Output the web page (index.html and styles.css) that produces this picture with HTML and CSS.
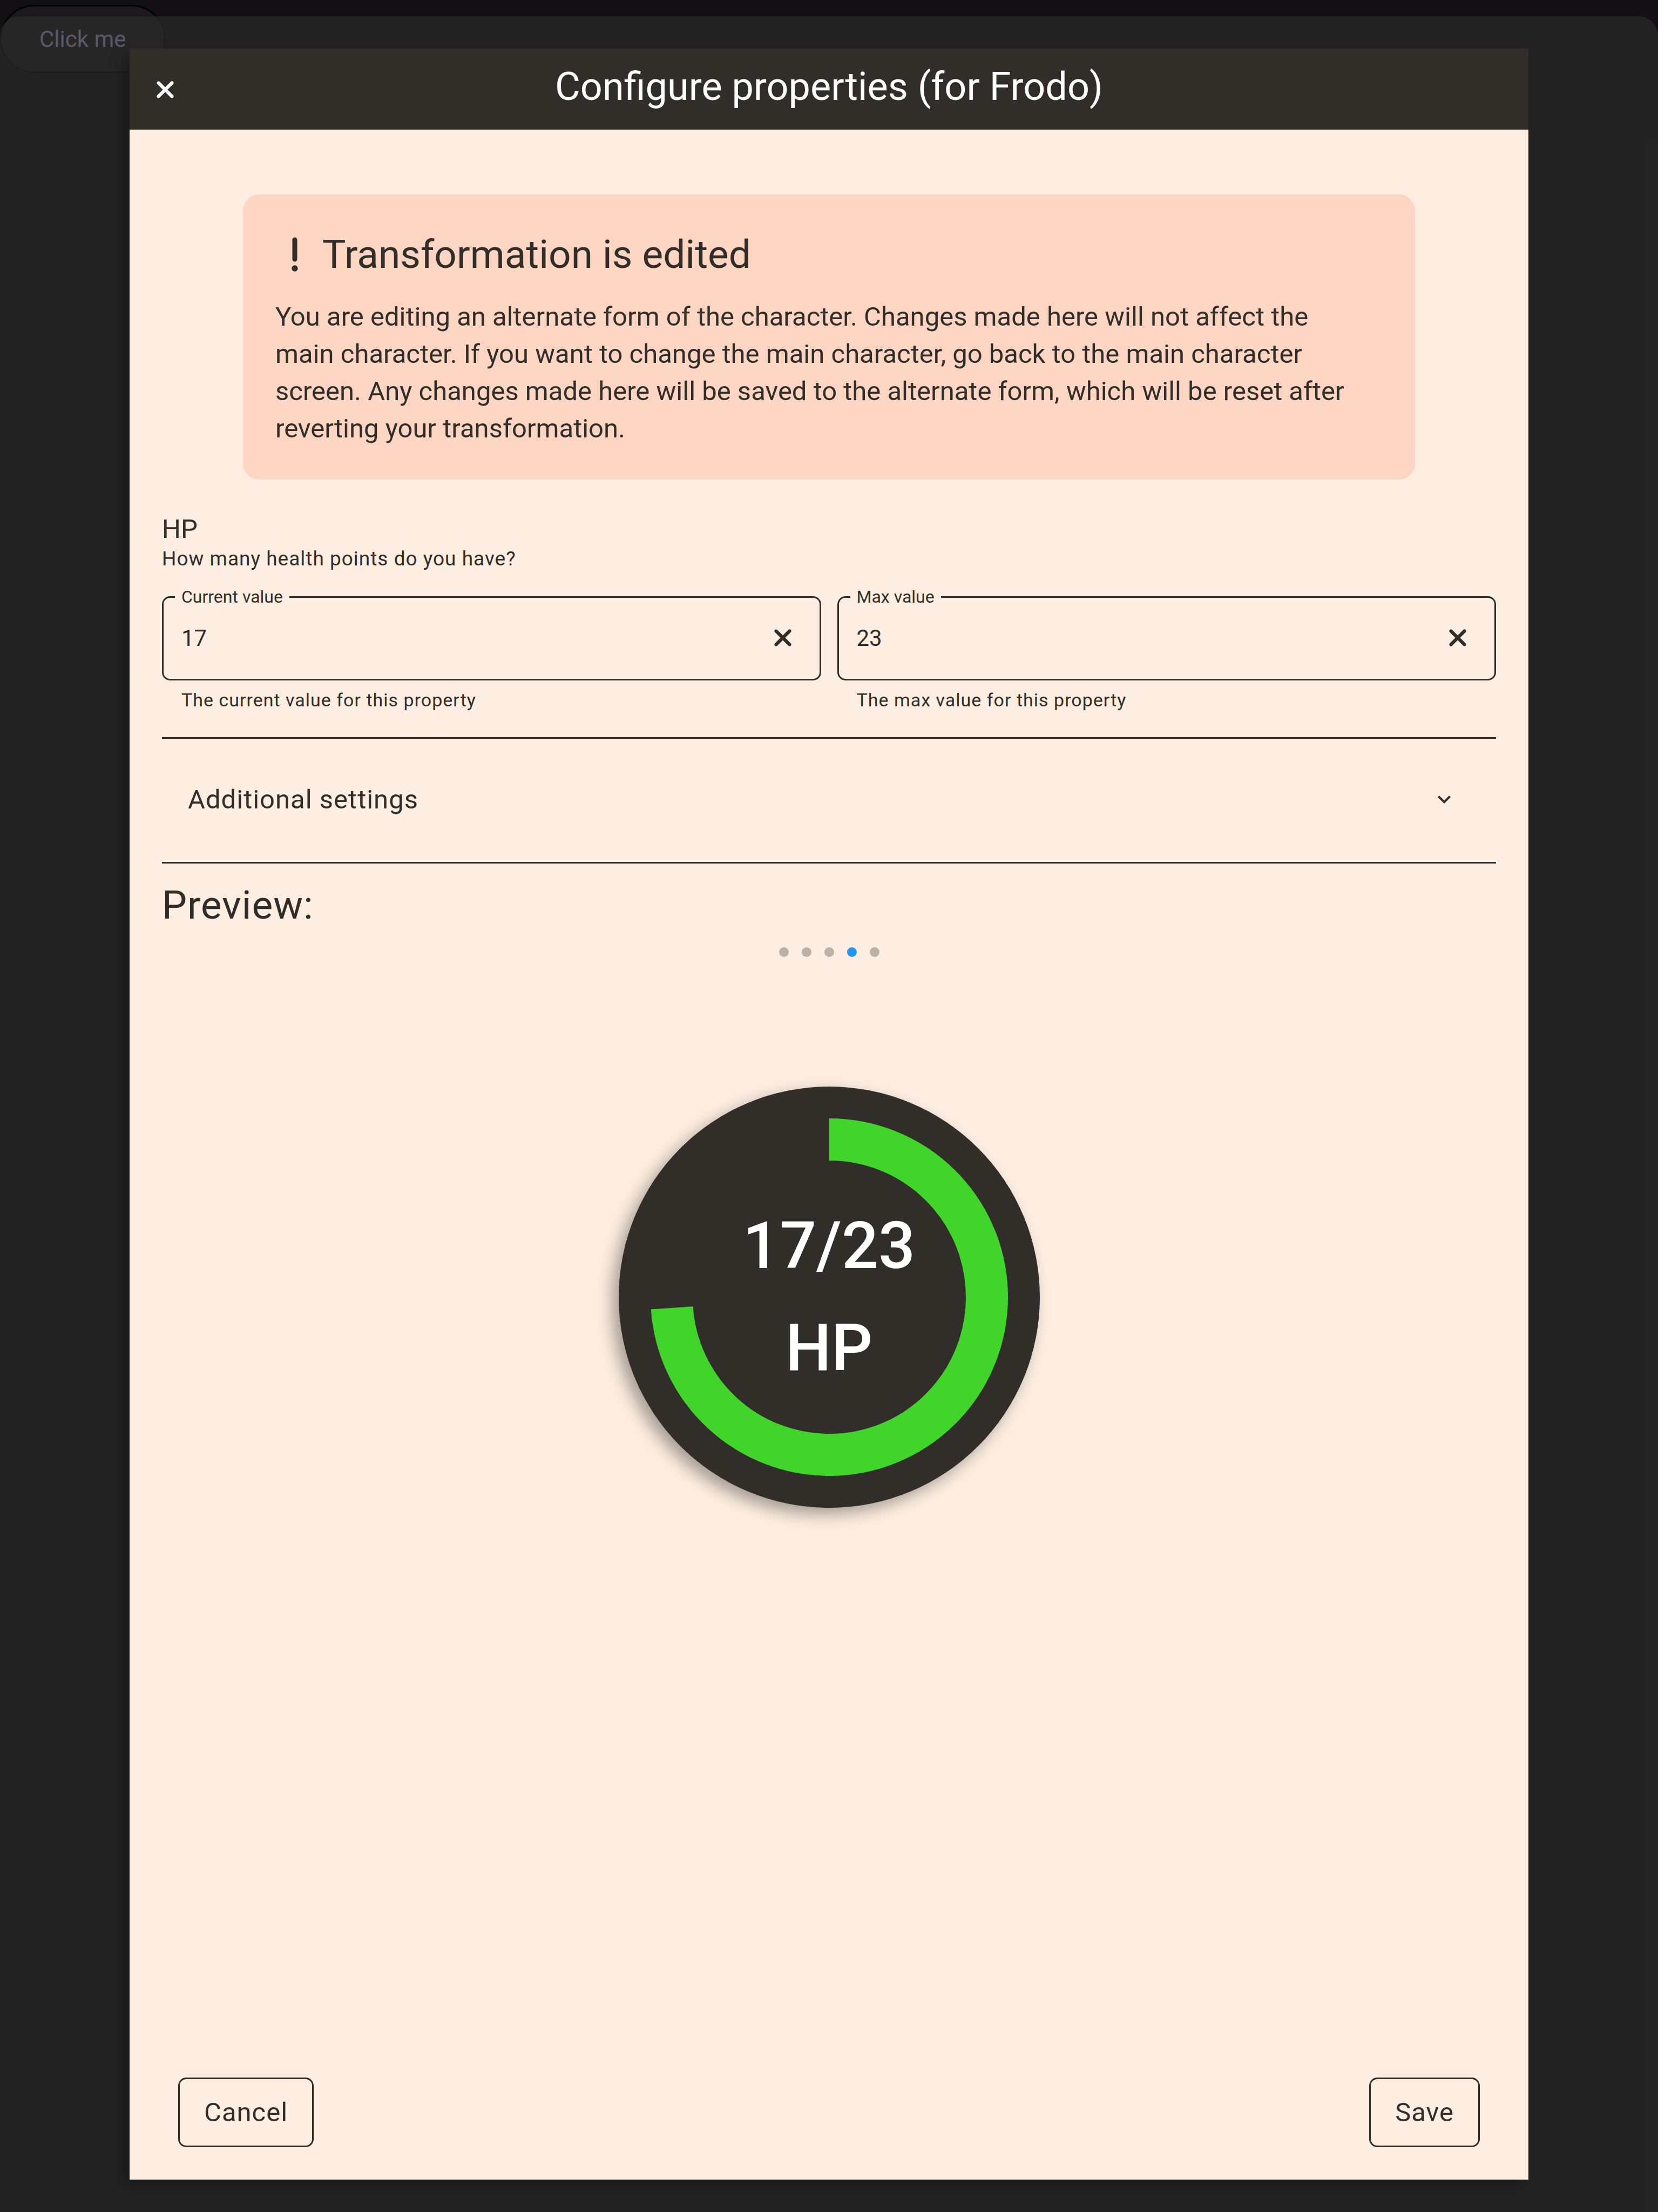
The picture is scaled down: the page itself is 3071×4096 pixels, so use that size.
FILE: index.html
```html
<!DOCTYPE html>
<html lang="en">
<head>
<meta charset="utf-8">
<title>Configure properties</title>
<link rel="stylesheet" href="styles.css">
</head>
<body>
<svg class="sprite" aria-hidden="true">
  <symbol id="xmark" viewBox="0 0 384 512"><path d="M342.6 150.6c12.5-12.5 12.5-32.8 0-45.3s-32.8-12.5-45.3 0L192 210.7 86.6 105.4c-12.5-12.5-32.8-12.5-45.3 0s-12.5 32.8 0 45.3L146.7 256 41.4 361.4c-12.5 12.5-12.5 32.8 0 45.3s32.8 12.5 45.3 0L192 301.3 297.4 406.6c12.5 12.5 32.8 12.5 45.3 0s12.5-32.8 0-45.3L237.3 256 342.6 150.6z"/></symbol>
</svg>
<button class="open-button" type="button">Click me</button>
<div class="scrim">
  <main class="modal" role="dialog" aria-labelledby="modal-title">
    <header class="modal-header">
      <button class="icon-button" type="button" aria-label="Close"><svg class="icon"><use href="#xmark"/></svg></button>
      <h1 class="modal-title" id="modal-title">Configure properties (for Frodo)</h1>
    </header>
    <div class="modal-body">
      <section class="alert">
        <h2 class="alert-title">
          <svg class="alert-icon" viewBox="0 0 128 512" aria-hidden="true"><path d="M96 64c0-17.7-14.3-32-32-32S32 46.3 32 64V320c0 17.7 14.3 32 32 32s32-14.3 32-32V64zM64 480c22.1 0 40-17.9 40-40s-17.9-40-40-40-40 17.9-40 40 17.9 40 40 40z"/></svg>
          Transformation is edited
        </h2>
        <p class="alert-text">You are editing an alternate form of the character. Changes made here will not affect the main character. If you want to change the main character, go back to the main character screen. Any changes made here will be saved to the alternate form, which will be reset after reverting your transformation.</p>
      </section>
      <h2 class="property-name">HP</h2>
      <p class="property-help">How many health points do you have?</p>
      <div class="fields">
        <div class="field">
          <fieldset class="field-box">
            <legend class="field-legend"><label for="current">Current value</label></legend>
            <input class="field-input" id="current" type="text" value="17" aria-describedby="current-help">
            <button class="icon-button" type="button" aria-label="Clear current value"><svg class="icon"><use href="#xmark"/></svg></button>
          </fieldset>
          <p class="field-help" id="current-help">The current value for this property</p>
        </div>
        <div class="field">
          <fieldset class="field-box">
            <legend class="field-legend"><label for="max">Max value</label></legend>
            <input class="field-input" id="max" type="text" value="23" aria-describedby="max-help">
            <button class="icon-button" type="button" aria-label="Clear max value"><svg class="icon"><use href="#xmark"/></svg></button>
          </fieldset>
          <p class="field-help" id="max-help">The max value for this property</p>
        </div>
      </div>
      <button class="expander" type="button" aria-expanded="false">
        Additional settings
        <svg class="chevron" viewBox="0 0 24 24" aria-hidden="true"><path d="M16.59 8.59L12 13.17 7.41 8.59 6 10l6 6 6-6z"/></svg>
      </button>
      <h2 class="preview-title">Preview:</h2>
      <div class="dots">
        <span class="dot"></span><span class="dot"></span><span class="dot"></span><span class="dot dot-active"></span><span class="dot"></span>
      </div>
      <div class="gauge">
        <svg class="gauge-ring" viewBox="0 0 780 780" aria-hidden="true"><circle class="gauge-arc" cx="390" cy="390" r="292" pathLength="23" transform="rotate(-90 390 390)"/></svg>
        <div class="gauge-label"><span>17/23</span><span>HP</span></div>
      </div>
      <footer class="modal-footer">
        <button class="button" type="button">Cancel</button>
        <button class="button" type="button">Save</button>
      </footer>
    </div>
  </main>
</div>
</body>
</html>
```

FILE: styles.css
```css
:root {
  --ink: #312d28;
  --paper: #fdeee1;
}

* {
  box-sizing: border-box;
}

body {
  margin: 0;
  min-height: 100vh;
  display: flex;
  flex-direction: column;
  position: relative;
  padding-top: 30px;
  background: #131015;
  color: var(--ink);
  font-family: Roboto, "Liberation Sans", sans-serif;
  font-size: 49px;
}

h1,
h2,
p {
  margin: 0;
  font-weight: 400;
}

button,
input {
  font: inherit;
  color: inherit;
}

.sprite {
  position: absolute;
  width: 0;
  height: 0;
}

.open-button {
  position: absolute;
  top: 9px;
  left: 0;
  height: 126px;
  padding: 0 70px;
  border: 3px solid #000;
  border-radius: 63px;
  background: #1b191e;
  color: #d0bcff;
  font-size: 42px;
}

.scrim {
  position: relative;
  flex: 1;
  display: flex;
  padding: 60px 240px;
  border-radius: 36px 36px 0 0;
  background: rgba(43, 44, 42, 0.7);
}

.modal {
  flex: 1;
  display: flex;
  flex-direction: column;
  background: var(--paper);
  box-shadow: -12px 12px 24px rgba(0, 0, 0, 0.3);
}

.modal-header {
  display: grid;
  grid-template-columns: 96px 1fr 96px;
  align-items: center;
  height: 150px;
  padding: 2px 18px 0;
  background: var(--ink);
  color: #fff;
}

.modal-title {
  padding-bottom: 10px;
  font-size: 72px;
  line-height: 84px;
  text-align: center;
}

.icon-button {
  display: flex;
  align-items: center;
  justify-content: center;
  width: 96px;
  height: 96px;
  padding: 0;
  border: 0;
  background: none;
}

.icon {
  width: 50px;
  height: 50px;
  fill: currentColor;
}

.modal-body {
  flex: 1;
  display: flex;
  flex-direction: column;
  padding: 120px 60px 60px;
}

.alert {
  margin: 0 150px 60px;
  padding: 60px;
  border-radius: 30px;
  background: #fcd5c3;
}

.alert-title {
  display: flex;
  align-items: center;
  gap: 15px;
  margin-bottom: 30px;
  font-size: 73px;
  line-height: 102px;
}

.alert-icon {
  width: 72px;
  height: 72px;
  fill: currentColor;
}

.alert-text {
  padding-right: 30px;
  line-height: 69px;
}

.property-name {
  font-size: 49px;
  line-height: 64px;
}

.property-help {
  margin-bottom: 28px;
  font-size: 37px;
  line-height: 46px;
  letter-spacing: 1px;
}

.fields {
  display: grid;
  grid-template-columns: 1fr 1fr;
  gap: 30px;
  margin-bottom: 45px;
}

.field-box {
  display: flex;
  align-items: center;
  margin: 0;
  min-width: 0;
  padding: 0 20px 20px 21px;
  border: 3px solid var(--ink);
  border-radius: 15px;
}

.field-legend {
  padding: 0 12px;
  font-size: 32px;
  line-height: 39px;
}

.field-input {
  flex: 1;
  min-width: 0;
  height: 112px;
  padding: 0 12px;
  border: 0;
  background: none;
  font-size: 42px;
}

.field-help {
  margin-top: 12px;
  padding-left: 36px;
  font-size: 34px;
  line-height: 48px;
  letter-spacing: 1px;
}

.expander {
  display: flex;
  align-items: center;
  justify-content: space-between;
  height: 234px;
  padding: 0 72px 4px 48px;
  border: solid var(--ink);
  border-width: 3px 0;
  background: none;
  letter-spacing: 1px;
}

.chevron {
  width: 48px;
  height: 48px;
  fill: currentColor;
}

.preview-title {
  margin: 35px 0 36px;
  font-size: 73px;
  line-height: 84px;
  letter-spacing: 1px;
}

.dots {
  display: flex;
  justify-content: center;
  gap: 24px;
  margin-bottom: 240px;
}

.dot {
  width: 18px;
  height: 18px;
  border-radius: 50%;
  background: #bcb1a6;
}

.dot-active {
  background: #2196f3;
}

.gauge {
  display: grid;
  place-items: center;
  align-self: center;
  width: 780px;
  height: 780px;
  border-radius: 50%;
  background: var(--ink);
  box-shadow: -12px 12px 30px rgba(0, 0, 0, 0.35);
  color: #fff;
}

.gauge-ring,
.gauge-label {
  grid-area: 1 / 1;
}

.gauge-ring {
  width: 780px;
  height: 780px;
}

.gauge-arc {
  fill: none;
  stroke: #41d42b;
  stroke-width: 78;
  stroke-dasharray: 17 23;
}

.gauge-label {
  display: flex;
  flex-direction: column;
  text-align: center;
  font-size: 120px;
  font-weight: 500;
  line-height: 189px;
}

.modal-footer {
  display: flex;
  justify-content: space-between;
  margin-top: auto;
  padding: 0 30px;
}

.button {
  height: 129px;
  padding: 0 45px;
  border: 3px solid var(--ink);
  border-radius: 15px;
  background: none;
  letter-spacing: 1px;
}
```
